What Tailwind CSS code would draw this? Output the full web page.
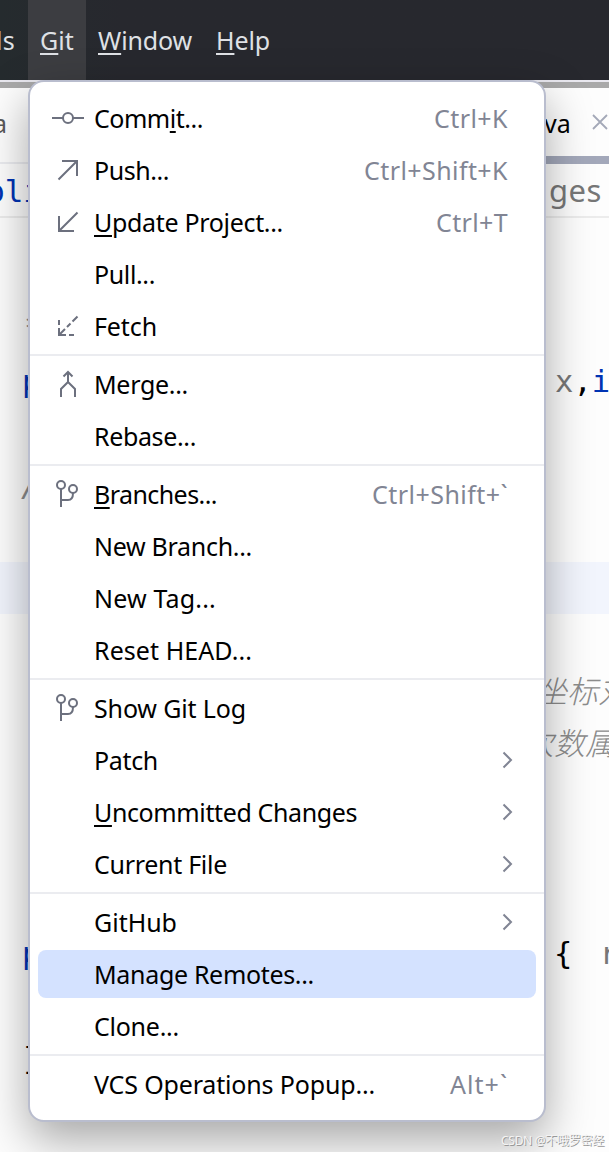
<!DOCTYPE html>
<html lang="en">
<head>
<meta charset="utf-8">
<title>Git menu</title>
<script src="https://cdn.jsdelivr.net/npm/@tailwindcss/browser@4"></script>
</head>
<body class="relative h-[1152px] w-[609px] overflow-hidden bg-[#fdfdfd] font-['Noto_Sans','Noto_Sans_CJK_SC',sans-serif] text-[25px] leading-[52px] text-black">

<header class="flex h-20 items-center bg-linear-to-r from-[#252b2e] to-[#27282e] to-20% text-[#dfe1e5]">
  <div class="flex h-full w-7 items-center justify-end pr-[13px]"><span class="whitespace-pre" data-w="19">ls</span></div>
  <div class="flex h-full w-[58px] items-center bg-[#3c3d41] pl-3"><span class="whitespace-pre" data-w="34"><u class="underline decoration-2 underline-offset-3">G</u>it</span></div>
  <div class="flex h-full w-[118px] items-center pl-3"><span class="whitespace-pre" data-w="94"><u class="underline decoration-2 underline-offset-3">W</u>indow</span></div>
  <div class="flex h-full items-center pl-3"><span class="whitespace-pre" data-w="54"><u class="underline decoration-2 underline-offset-3">H</u>elp</span></div>
</header>
<div class="h-0.5 bg-[#e9e8ef]"></div>
<div class="h-1.5 bg-[#a9a9a9]"></div>

<div class="flex h-[76px]">
  <div class="w-[300px] shrink-0 border-b-2 border-[#ebecf0] pt-[9px] text-[#5a5a5a]"><span class="-ml-[7px]">a</span></div>
  <div class="flex flex-1 border-b-8 border-[#a3a8ba] pl-[244px] pt-[9px]">
    <span class="shrink-0" data-w="27">va</span>
    <svg class="ml-[21px] mt-[17px] shrink-0" width="16" height="16" viewBox="0 0 16 16" fill="none" stroke="#a4a9b8" stroke-width="1.8"><path d="M1 1 15 15M15 1 1 15"/></svg>
  </div>
</div>
<div class="flex h-[54px] border-b-2 border-[#ececec] pt-px font-['DejaVu_Sans_Mono',monospace] text-[31px] text-[#0033b3]">
  <span class="-ml-[14px] w-[551px] shrink-0 whitespace-pre">bli</span>
  <span class="-mt-px w-[72px] shrink-0 pl-[12px] font-['Noto_Sans',sans-serif] text-[31px] text-[#777]"><span data-w="53">ges</span></span>
</div>
<main class="flex flex-col pt-[84px] font-['DejaVu_Sans_Mono','Noto_Sans_CJK_SC',monospace] text-[30.5px]">
  <div class="h-[52px] pl-[24px] italic text-[#8c8c8c]">*</div>
  <div class="flex h-[52px] pt-0.5 text-[#0033b3]"><span class="w-[555px] shrink-0 pl-[22px]">p</span><span class="whitespace-pre"><span class="text-[#777]">x</span><span class="text-black">,</span>i</span></div>
  <div class="h-[52px]"></div>
  <div class="h-[52px] pl-[21px] pt-0.5 italic text-[#8c8c8c]">/</div>
  <div class="h-[52px]"></div>
  <div class="h-[52px] bg-[#f2f5fd]"></div>
  <div class="h-[52px]"></div>
  <div class="-mt-0.5 h-[52px] overflow-hidden whitespace-nowrap pl-[536px] font-['Noto_Sans_CJK_SC',sans-serif] text-[31px] font-light italic text-[#8c8c8c]">坐标对</div>
  <div class="mb-0.5 h-[52px] overflow-hidden whitespace-nowrap pl-[523px] font-['Noto_Sans_CJK_SC',sans-serif] text-[31px] font-light italic text-[#8c8c8c]">次数属</div>
  <div class="h-[156px]"></div>
  <div class="flex h-[52px] pt-0.5"><span class="w-[554px] shrink-0 pl-[22px] text-[#0033b3]">p</span><span class="whitespace-pre">{ <span class="ml-[9px] text-[#777]">r</span></span></div>
  <div class="h-[52px]"></div>
  <div class="h-[52px] pl-[23px] pt-[3px]">}</div>
</main>

<nav class="absolute left-7 top-20 flex h-[1042px] w-[518px] flex-col rounded-2xl border-2 border-[#b9bdce] bg-white py-2.5 shadow-[0_18px_46px_rgba(0,0,0,0.34)]">
  <div class="flex h-[52px] items-center pr-9"><i class="flex w-16 pl-[22px]"><svg width="32" height="32" viewBox="0 0 32 32" fill="none" stroke="#6c707e" stroke-width="2"><path d="M0 16H11M21 16H32"/><circle cx="16" cy="16" r="5"/></svg></i><span class="flex-1 whitespace-pre"><span data-w="109">Comm<u class="underline decoration-2 underline-offset-3">i</u>t...</span></span><span class="text-[#818594]" data-w="74">Ctrl+K</span></div>
  <div class="flex h-[52px] items-center pr-9"><i class="flex w-16 pl-[22px]"><svg width="32" height="32" viewBox="0 0 32 32" fill="none" stroke="#6c707e" stroke-width="2"><path d="M6.500 25.500 25 7M10 7H25V22"/></svg></i><span class="flex-1 whitespace-pre"><span data-w="75">Push...</span></span><span class="text-[#818594]" data-w="144">Ctrl+Shift+K</span></div>
  <div class="flex h-[52px] items-center pr-9"><i class="flex w-16 pl-[22px]"><svg width="32" height="32" viewBox="0 0 32 32" fill="none" stroke="#6c707e" stroke-width="2"><path d="M25.500 6.500 7 25M7 10V25H22"/></svg></i><span class="flex-1 whitespace-pre"><span data-w="189"><u class="underline decoration-2 underline-offset-3">U</u>pdate Project...</span></span><span class="text-[#818594]" data-w="72">Ctrl+T</span></div>
  <div class="flex h-[52px] items-center pl-16"><span class="whitespace-pre" data-w="61">Pull...</span></div>
  <div class="flex h-[52px] items-center"><i class="flex w-16 pl-[22px]"><svg width="32" height="32" viewBox="0 0 32 32" fill="none" stroke="#6c707e" stroke-width="2"><path d="M25.500 6.500 20.500 11.500M18.500 13.500 15 17M13 19 7 25M7 10V15M7 18V25H14M17 25H22"/></svg></i><span class="whitespace-pre" data-w="63">Fetch</span></div>
  <hr class="my-0.5 h-0.5 shrink-0 border-0 bg-[#ebecf0]">
  <div class="flex h-[52px] items-center"><i class="flex w-16 pl-[22px]"><svg width="32" height="32" viewBox="0 0 32 32" fill="none" stroke="#6c707e" stroke-width="2"><path d="M11.500 8.500 16 4 20.500 8.500M16 4V14L9 21V29M16 14 23 21V29"/></svg></i><span class="whitespace-pre" data-w="94">Merge...</span></div>
  <div class="flex h-[52px] items-center pl-16"><span class="whitespace-pre" data-w="102">Rebase...</span></div>
  <hr class="my-0.5 h-0.5 shrink-0 border-0 bg-[#ebecf0]">
  <div class="flex h-[52px] items-center pr-9"><i class="flex w-16 pl-[22px]"><svg width="32" height="32" viewBox="0 0 32 32" fill="none" stroke="#6c707e" stroke-width="2"><circle cx="9" cy="7" r="4"/><circle cx="21" cy="11" r="4"/><path d="M9 11V29M9 22H16Q21 22 21 15"/></svg></i><span class="flex-1 whitespace-pre"><span data-w="123"><u class="underline decoration-2 underline-offset-3">B</u>ranches...</span></span><span class="text-[#818594]" data-w="136">Ctrl+Shift+`</span></div>
  <div class="flex h-[52px] items-center pl-16"><span class="whitespace-pre" data-w="158">New Branch...</span></div>
  <div class="flex h-[52px] items-center pl-16"><span class="whitespace-pre" data-w="122">New Tag...</span></div>
  <div class="flex h-[52px] items-center pl-16"><span class="whitespace-pre" data-w="158">Reset HEAD...</span></div>
  <hr class="my-0.5 h-0.5 shrink-0 border-0 bg-[#ebecf0]">
  <div class="flex h-[52px] items-center"><i class="flex w-16 pl-[22px]"><svg width="32" height="32" viewBox="0 0 32 32" fill="none" stroke="#6c707e" stroke-width="2"><circle cx="9" cy="7" r="4"/><circle cx="21" cy="11" r="4"/><path d="M9 11V29M9 22H16Q21 22 21 15"/></svg></i><span class="whitespace-pre" data-w="152">Show Git Log</span></div>
  <div class="flex h-[52px] items-center justify-between pl-16 pr-[31px]"><span class="whitespace-pre" data-w="64">Patch</span><svg width="11" height="18" viewBox="0 0 11 18" fill="none" stroke="#818594" stroke-width="2"><path d="m1.500 1.500 7.500 7.500-7.500 7.500"/></svg></div>
  <div class="flex h-[52px] items-center justify-between pl-16 pr-[31px]"><span class="whitespace-pre" data-w="263"><u class="underline decoration-2 underline-offset-3">U</u>ncommitted Changes</span><svg width="11" height="18" viewBox="0 0 11 18" fill="none" stroke="#818594" stroke-width="2"><path d="m1.500 1.500 7.500 7.500-7.500 7.500"/></svg></div>
  <div class="flex h-[52px] items-center justify-between pl-16 pr-[31px]"><span class="whitespace-pre" data-w="133">Current File</span><svg width="11" height="18" viewBox="0 0 11 18" fill="none" stroke="#818594" stroke-width="2"><path d="m1.500 1.500 7.500 7.500-7.500 7.500"/></svg></div>
  <hr class="my-0.5 h-0.5 shrink-0 border-0 bg-[#ebecf0]">
  <div class="flex h-[52px] items-center justify-between pl-16 pr-[31px]"><span class="whitespace-pre" data-w="83">GitHub</span><svg width="11" height="18" viewBox="0 0 11 18" fill="none" stroke="#818594" stroke-width="2"><path d="m1.500 1.500 7.500 7.500-7.500 7.500"/></svg></div>
  <div class="mx-2 my-0.5 flex h-12 items-center rounded-lg bg-[#d4e2ff] pl-14"><span class="whitespace-pre" data-w="220">Manage Remotes...</span></div>
  <div class="flex h-[52px] items-center pl-16"><span class="whitespace-pre" data-w="85">Clone...</span></div>
  <hr class="my-0.5 h-0.5 shrink-0 border-0 bg-[#ebecf0]">
  <div class="flex h-[52px] items-center pr-9"><span class="flex-1 whitespace-pre pl-16"><span data-w="281">VCS Operations Popup...</span></span><span class="text-[#818594]" data-w="58">Alt+`</span></div>
</nav>

<div class="absolute bottom-[2px] right-[5px] whitespace-nowrap text-[12px] leading-[18px] text-[#f4f4f4] [text-shadow:1px_1px_0_#999]"><span data-w="103">CSDN @不哦罗密经</span></div>

<script>
  function fitLabels() {
    for (const el of document.querySelectorAll('[data-w]')) {
      el.style.letterSpacing = '0px';
      const w = el.getBoundingClientRect().width;
      el.style.letterSpacing = (el.dataset.w - w) / [...el.textContent].length + 'px';
    }
  }
  window.addEventListener('load', () => {
    fitLabels();
    document.fonts.ready.then(fitLabels);
    requestAnimationFrame(() => requestAnimationFrame(fitLabels));
  });
</script>
</body>
</html>
